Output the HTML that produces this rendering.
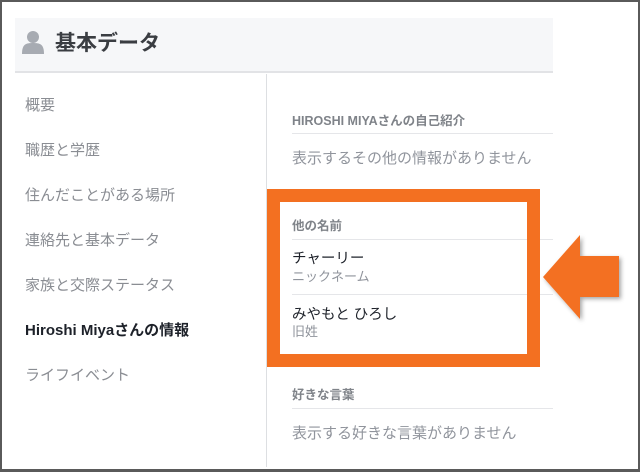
<!DOCTYPE html>
<html><head><meta charset="utf-8"><style>
*{margin:0;padding:0;box-sizing:border-box}
body{width:640px;height:472px;background:#fff;position:relative;overflow:hidden;font-family:"Liberation Sans","Noto Sans CJK JP",sans-serif}
.frame{position:absolute;left:0;top:0;width:640px;height:472px;border:2px solid #5a5a5a;border-bottom-width:3px}
.t{position:absolute;white-space:nowrap}
.nav{left:25px;font-size:15px;color:#8a8d93}
.line{position:absolute;height:1px;background:#e5e6e9}
</style></head><body>
<div style="position:absolute;left:15px;top:18px;width:538px;height:55px;background:#f6f7f9;border-bottom:2px solid #e2e3e6"></div>
<svg style="position:absolute;left:22px;top:30px" width="22" height="24" viewBox="0 0 22 24"><circle cx="11" cy="7" r="6" fill="#a7abb2"/><path d="M0 24 C0 14 4 13 11 13 C18 13 22 14 22 24Z" fill="#a7abb2"/></svg>
<div class="t" style="left:55px;top:27px;font-size:21px;font-weight:bold;color:#3a3d42">基本データ</div>
<div style="position:absolute;left:266px;top:74px;width:1px;height:393px;background:#dddfe2"></div>
<div class="t nav" style="top:94px">概要</div>
<div class="t nav" style="top:139px">職歴と学歴</div>
<div class="t nav" style="top:184px">住んだことがある場所</div>
<div class="t nav" style="top:229px">連絡先と基本データ</div>
<div class="t nav" style="top:274px">家族と交際ステータス</div>
<div class="t nav" style="top:319px;color:#1d2129;font-weight:bold">Hiroshi Miyaさんの情報</div>
<div class="t nav" style="top:364px">ライフイベント</div>

<div class="t" style="left:292px;top:110px;font-size:12.5px;font-weight:bold;color:#7f8389">HIROSHI MIYAさんの自己紹介</div>
<div class="line" style="left:292px;top:133px;width:261px"></div>
<div class="t" style="left:292px;top:147px;font-size:15px;color:#90949c">表示するその他の情報がありません</div>

<div style="position:absolute;left:267px;top:189px;width:273px;height:178px;background:#f37021"></div>
<div style="position:absolute;left:280px;top:202px;width:247px;height:152px;background:#fff"></div>
<div class="line" style="left:540px;top:239px;width:13px"></div>
<div class="line" style="left:540px;top:294px;width:13px"></div>
<div class="t" style="left:292px;top:215px;font-size:12.5px;font-weight:bold;color:#7f8389">他の名前</div>
<div class="line" style="left:292px;top:239px;width:235px"></div>
<div class="t" style="left:292px;top:247px;font-size:14.5px;color:#1d2129">チャーリー</div>
<div class="t" style="left:292px;top:266px;font-size:13px;color:#90949c">ニックネーム</div>
<div class="line" style="left:292px;top:294px;width:235px"></div>
<div class="t" style="left:292px;top:303px;font-size:14.5px;color:#1d2129">みやもと ひろし</div>
<div class="t" style="left:292px;top:321px;font-size:13px;color:#90949c">旧姓</div>

<svg style="position:absolute;left:540px;top:232px" width="90" height="94"><defs><filter id="s"><feDropShadow dx="2" dy="2" stdDeviation="2" flood-opacity="0.35"/></filter></defs><polygon points="3,45 40,3 40,24 79,24 79,65 40,65 40,87" fill="#f37021" filter="url(#s)"/></svg>

<div class="t" style="left:292px;top:384px;font-size:12.5px;font-weight:bold;color:#7f8389">好きな言葉</div>
<div class="line" style="left:292px;top:408px;width:261px"></div>
<div class="t" style="left:292px;top:422px;font-size:15px;color:#90949c">表示する好きな言葉がありません</div>
<div class="frame"></div>
</body></html>
